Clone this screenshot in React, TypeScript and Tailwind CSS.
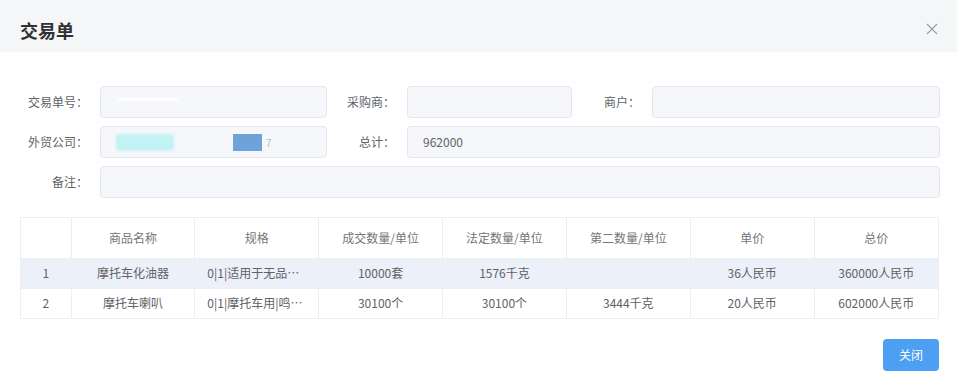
import React from 'react';

const font = { fontFamily: '"Noto Sans CJK SC", "Noto Sans", sans-serif' };

interface Item {
  idx: number;
  name: string;
  spec: string;
  dealQty: string;
  legalQty: string;
  secondQty: string;
  price: string;
  total: string;
}

const items: Item[] = [
  { idx: 1, name: '摩托车化油器', spec: '0|1|适用于无品…', dealQty: '10000套', legalQty: '1576千克', secondQty: '', price: '36人民币', total: '360000人民币' },
  { idx: 2, name: '摩托车喇叭', spec: '0|1|摩托车用|鸣…', dealQty: '30100个', legalQty: '30100个', secondQty: '3444千克', price: '20人民币', total: '602000人民币' },
];

const headers = ['', '商品名称', '规格', '成交数量/单位', '法定数量/单位', '第二数量/单位', '单价', '总价'];

const Label: React.FC<{ text: string }> = ({ text }) => (
  <div className="w-[80px] shrink-0 pr-[12px] text-right text-[12px] text-[#606266]">{text}</div>
);

const Field: React.FC<{ className?: string; children?: React.ReactNode }> = ({ className, children }) => (
  <div className={`h-[32px] flex items-center px-[15px] rounded-[4px] border border-[#e4e7ed] bg-[#f5f7fa] text-[12px] text-[#606266] ${className ?? ''}`}>
    {children}
  </div>
);

export default function App() {
  return (
    <div className="w-[957px] h-[388px] bg-white overflow-hidden" style={font}>
      <div className="h-[52px] bg-[#f5f6f8] flex items-center justify-between pl-[20px] pr-[19px]">
        <h2 className="text-[18px] font-bold text-[#303133] pt-[8px]">交易单</h2>
        <svg width="12" height="12" viewBox="0 0 12 12" className="mt-[6px]">
          <path d="M1 1L11 11M11 1L1 11" stroke="#9a9da2" strokeWidth="1.1" />
        </svg>
      </div>

      <div className="pt-[34px] pl-[20px] pr-[17px] flex flex-col gap-[8px]">
        <div className="flex items-center">
          <Label text="交易单号：" />
          <Field className="w-[227px]">
            <div className="w-[60px] h-[3px] bg-white blur-[1px] ml-[2px] -mt-[6px]" />
          </Field>
          <Label text="采购商：" />
          <Field className="w-[165px]" />
          <Label text="商户：" />
          <Field className="flex-1" />
        </div>
        <div className="flex items-center">
          <Label text="外贸公司：" />
          <Field className="w-[227px] gap-0">
            <div className="w-[58px] h-[17px] rounded-[4px] bg-[#c3f2f5] blur-[1px]" />
            <div className="w-[59px]" />
            <div className="w-[29px] h-[17px] bg-[#6ea3d9]" />
            <span className="ml-[4px] text-[10px] text-[#bbb]">7</span>
          </Field>
          <Label text="总计：" />
          <Field className="flex-1">962000</Field>
        </div>
        <div className="flex items-center">
          <Label text="备注：" />
          <Field className="flex-1" />
        </div>
      </div>

      <div className="mt-[19px] mx-[20px] w-[919px] border border-[#ebeef5]">
        <table className="w-full border-collapse table-fixed text-[12px] text-[#606266]">
          <colgroup>
            <col className="w-[50px]" />
            <col /><col /><col /><col /><col /><col /><col />
          </colgroup>
          <thead>
            <tr className="h-[40px]">
              {headers.map((h, i) => (
                <th key={i} className={`font-normal text-[#73767a] text-center ${i > 0 ? 'border-l border-[#ebeef5]' : ''}`}>{h}</th>
              ))}
            </tr>
          </thead>
          <tbody>
            {items.map((it) => (
              <tr key={it.idx} className={`h-[30px] border-t border-[#ebeef5] ${it.idx === 1 ? 'bg-[#ecf0f9]' : ''}`}>
                <td className="text-center">{it.idx}</td>
                <td className="text-center border-l border-[#ebeef5]">{it.name}</td>
                <td className="px-[12px] border-l border-[#ebeef5] whitespace-nowrap overflow-hidden">{it.spec}</td>
                <td className="text-center border-l border-[#ebeef5]">{it.dealQty}</td>
                <td className="text-center border-l border-[#ebeef5]">{it.legalQty}</td>
                <td className="text-center border-l border-[#ebeef5]">{it.secondQty}</td>
                <td className="text-center border-l border-[#ebeef5]">{it.price}</td>
                <td className="text-center border-l border-[#ebeef5]">{it.total}</td>
              </tr>
            ))}
          </tbody>
        </table>
      </div>

      <div className="flex justify-end pr-[18px] mt-[20px]">
        <button className="w-[56px] h-[32px] rounded-[4px] bg-[#4d9ff2] text-white text-[12px]">关闭</button>
      </div>
    </div>
  );
}
